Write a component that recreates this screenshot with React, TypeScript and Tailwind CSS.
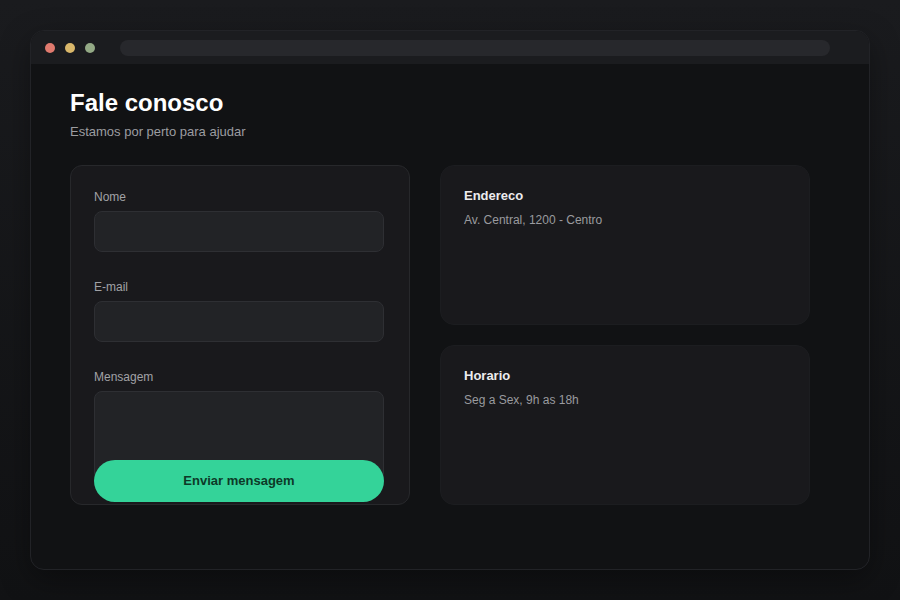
const FIELDS: Array<{ label: string; type: string }> = [
  { label: "Nome", type: "text" },
  { label: "E-mail", type: "email" },
];

const INFO_CARDS: Array<{ title: string; text: string }> = [
  { title: "Endereco", text: "Av. Central, 1200 - Centro" },
  { title: "Horario", text: "Seg a Sex, 9h as 18h" },
];

function WindowBar() {
  return (
    <div className="flex h-[33px] items-center bg-[#1b1c1f] pl-[14px] pr-[39px]">
      <div className="flex items-center gap-[10px]">
        <span className="h-[10px] w-[10px] rounded-full bg-[#e07a6e]" />
        <span className="h-[10px] w-[10px] rounded-full bg-[#d9b76a]" />
        <span className="h-[10px] w-[10px] rounded-full bg-[#93a985]" />
      </div>
      <div className="ml-[25px] h-[16px] flex-1 rounded-full bg-[#27282c]" />
    </div>
  );
}

function ContactForm() {
  return (
    <form
      className="flex h-[340px] flex-col rounded-[12px] border border-[#27282b] bg-[#19191c] pb-[2px] pl-[23px] pr-[25px] pt-[23px]"
      onSubmit={(e) => e.preventDefault()}
    >
      {FIELDS.map((f) => (
        <label key={f.label} className="mb-[27px] flex shrink-0 flex-col">
          <span className="mb-[6px] text-[12px] leading-[16px] text-[#a1a2a6]">
            {f.label}
          </span>
          <input
            type={f.type}
            className="h-[41px] rounded-[8px] border border-[#2e2f33] bg-[#222326] px-3 text-[13px] text-white outline-none"
          />
        </label>
      ))}
      <label className="flex shrink-0 flex-col">
        <span className="mb-[6px] text-[12px] leading-[16px] text-[#a1a2a6]">
          Mensagem
        </span>
        <textarea className="h-[90px] resize-none rounded-[8px] border border-[#2e2f33] bg-[#222326] px-3 py-2 text-[13px] text-white outline-none" />
      </label>
      {/* the button sits over the bottom of the textarea */}
      <button
        type="submit"
        className="relative -mt-[21px] h-[42px] shrink-0 rounded-full bg-[#34d399] text-[13px] font-bold text-[#0d3a28]"
      >
        Enviar mensagem
      </button>
    </form>
  );
}

function InfoCard({ title, text }: { title: string; text: string }) {
  return (
    <div className="h-[160px] rounded-[14px] border border-[#1c1d20] bg-[#19191c] px-[23px] py-[22px]">
      <h3 className="text-[13px] font-bold leading-[16px] text-[#ececee]">
        {title}
      </h3>
      <p className="mt-[8px] text-[12px] leading-[16px] text-[#9a9b9f]">
        {text}
      </p>
    </div>
  );
}

export default function App() {
  return (
    <div
      className="flex h-[600px] w-[900px] items-start justify-center bg-gradient-to-b from-[#1a1b1e] to-[#111214] pt-[30px]"
      style={{ fontFamily: '"Liberation Sans", Arial, sans-serif' }}
    >
      <div className="h-[540px] w-[840px] overflow-hidden rounded-[14px] border border-[#222327] bg-[#111214] shadow-[0_10px_30px_rgba(0,0,0,0.35)]">
        <WindowBar />
        <main className="px-[39px] pt-[25px]">
          <h1 className="text-[24px] font-bold leading-[28px] text-white">
            Fale conosco
          </h1>
          <p className="mt-[6px] text-[13px] leading-[18px] text-[#9c9da1]">
            Estamos por perto para ajudar
          </p>
          <div className="mt-[24px] grid grid-cols-[340px_370px] gap-[30px]">
            <ContactForm />
            <div className="flex flex-col gap-[20px]">
              {INFO_CARDS.map((c) => (
                <InfoCard key={c.title} title={c.title} text={c.text} />
              ))}
            </div>
          </div>
        </main>
      </div>
    </div>
  );
}
